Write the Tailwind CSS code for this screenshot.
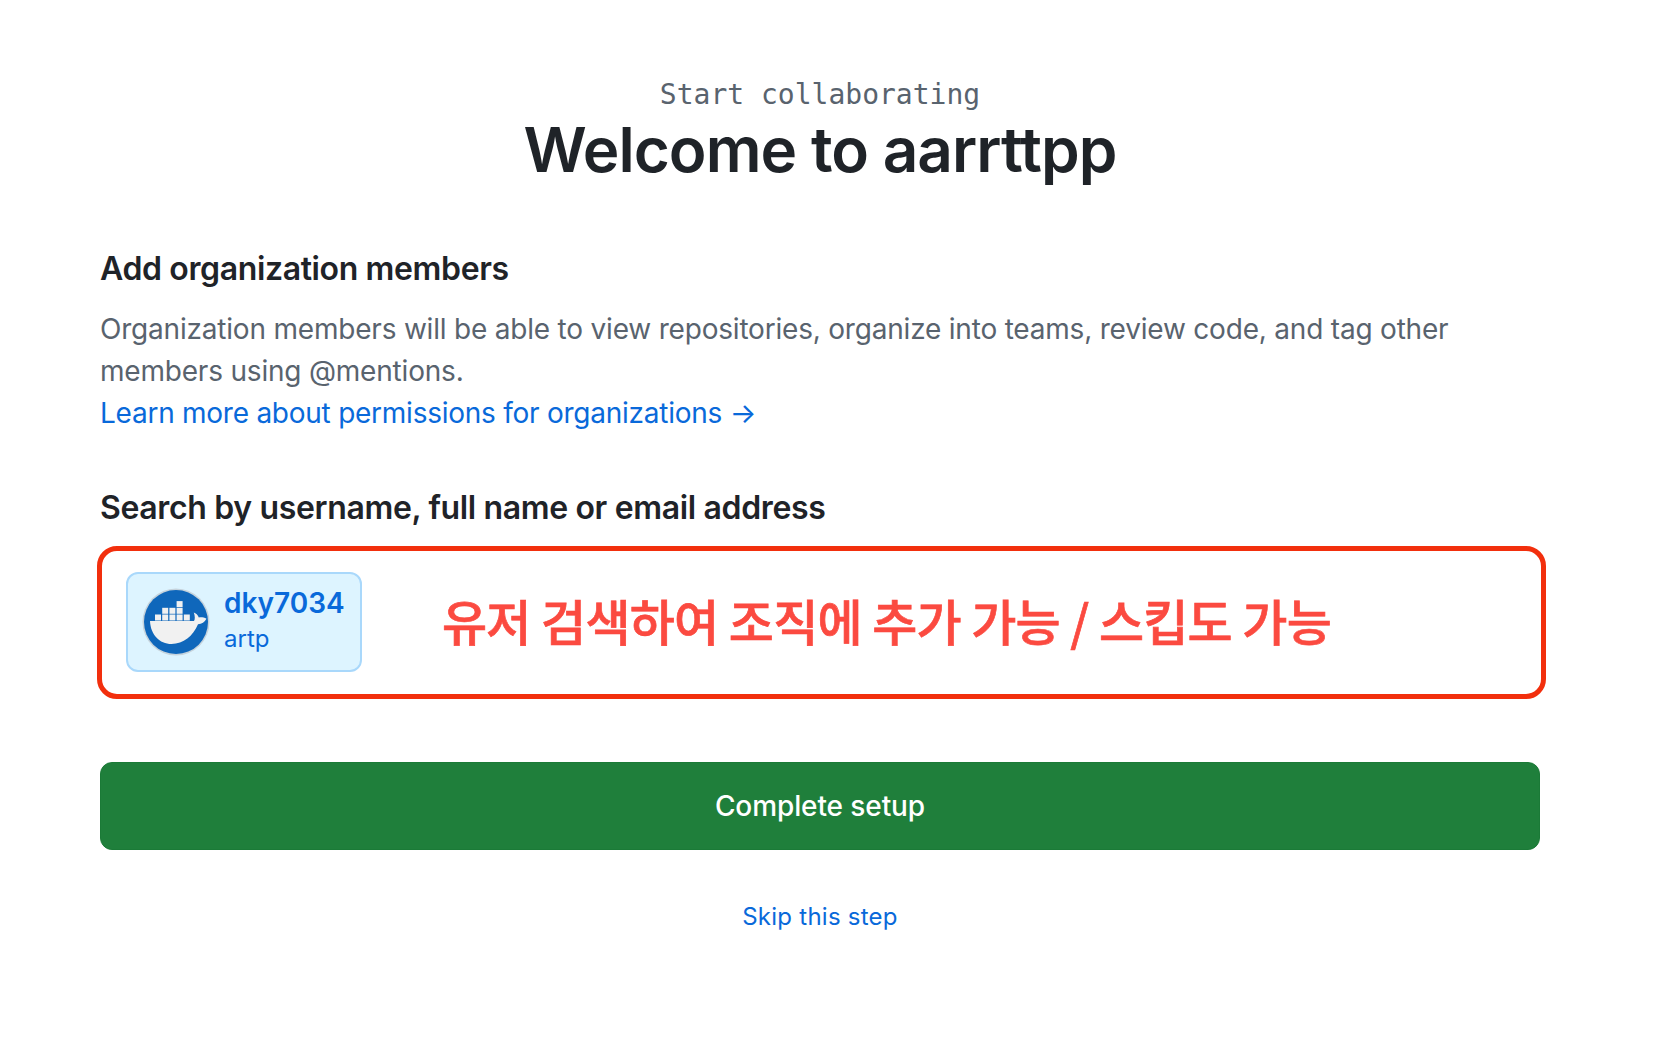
<!DOCTYPE html>
<html lang="en">
<head>
    <meta charset="UTF-8">
    <meta name="viewport" content="width=device-width, initial-scale=1.0">
    <title>Welcome to aarrttpp</title>
    <script src="https://cdn.jsdelivr.net/npm/@tailwindcss/browser@4"></script>
</head>
<body class="bg-white font-['Inter','Noto_Sans_CJK_KR',sans-serif] text-[#1f2328]">
    <main class="w-[1440px] ml-[100px] pt-[75px]">
        <!-- Header -->
        <header class="text-center">
            <p class="font-['DejaVu_Sans_Mono',monospace] text-[28px] leading-[40px] text-[#59636e]">Start collaborating</p>
            <h1 class="text-[62px] leading-[70px] font-semibold tracking-[-0.95px]">Welcome to aarrttpp</h1>
        </header>

        <!-- Members copy -->
        <section class="mt-[60px]">
            <h2 class="text-[32px] leading-[48px] font-semibold tracking-[-0.37px]">Add organization members</h2>
            <p class="mt-[15px] text-[28px] leading-[42px] text-[#59636e] tracking-[-0.2px]">Organization members will be able to view repositories, organize into teams, review code, and tag other members using @mentions.</p>
            <a href="#" class="block text-[28px] leading-[42px] text-[#0969da] tracking-[-0.25px]">Learn more about permissions for organizations →</a>
        </section>

        <!-- Search -->
        <section class="mt-[50px]">
            <label class="block text-[32px] leading-[48px] font-semibold tracking-[-0.35px]">Search by username, full name or email address</label>
            <div class="mt-[14px] -ml-[3px] w-[1449px] h-[153px] border-[5px] border-[#f22f0d] rounded-[20px] flex items-center pl-[24px]">
                <div class="-mt-[1px] w-[236px] h-[100px] bg-[#ddf4ff] border-2 border-[#a9d8fb] rounded-[12px] flex items-center pl-[14px] gap-[14px]">
                    <svg class="w-[68px] h-[68px] shrink-0" viewBox="0 0 68 68">
                        <circle cx="34" cy="34" r="33.500" fill="#c6d3dc"/>
                        <circle cx="34" cy="34" r="32" fill="#0f67bb"/>
                        <path d="M8 33h44c1.200-1.500 1-5-.2-8.500 2 .7 4.200 2.600 5 5 2.400-.4 5.400 0 7.700 1.300-1.800 3.600-4.800 5.300-8.500 5.500C51 48 41.500 56 29.500 56 17.500 56 8.500 46.500 8 33z" fill="#f1f1f1"/>
                        <g fill="#f1f1f1">
                            <rect x="13" y="26.500" width="6" height="6"/>
                            <rect x="20.200" y="26.500" width="6" height="6"/>
                            <rect x="27.400" y="26.500" width="6" height="6"/>
                            <rect x="34.600" y="26.500" width="6" height="6"/>
                            <rect x="41.800" y="26.500" width="6" height="6"/>
                            <rect x="20.200" y="19.800" width="6" height="6"/>
                            <rect x="27.400" y="19.800" width="6" height="6"/>
                            <rect x="34.600" y="19.800" width="6" height="6"/>
                            <rect x="34.600" y="13.100" width="6" height="6"/>
                        </g>
                    </svg>
                    <div class="text-[#0969da]">
                        <div class="text-[28px] leading-[38px] font-semibold -mt-[4px]">dky7034</div>
                        <div class="text-[24px] leading-[34px]">artp</div>
                    </div>
                </div>
                <p class="ml-[80px] -mt-[6px] text-[49px] leading-[60px] font-medium [-webkit-text-stroke:0.7px_#fb4a40] text-[#fb4a40] font-['Noto_Sans_CJK_KR',sans-serif] tracking-[-0.72px]">유저 검색하여 조직에 추가 가능 / 스킵도 가능</p>
            </div>
        </section>

        <!-- Actions -->
        <button class="mt-[63px] w-full h-[88px] bg-[#1f7f3b] border border-[#1b7a37] rounded-[12px] text-white text-[28px] font-medium tracking-[-0.1px]">Complete setup</button>
        <div class="mt-[49px] text-center">
            <a href="#" class="text-[24px] leading-[36px] text-[#0969da] tracking-[0.25px]">Skip this step</a>
        </div>
    </main>
</body>
</html>
